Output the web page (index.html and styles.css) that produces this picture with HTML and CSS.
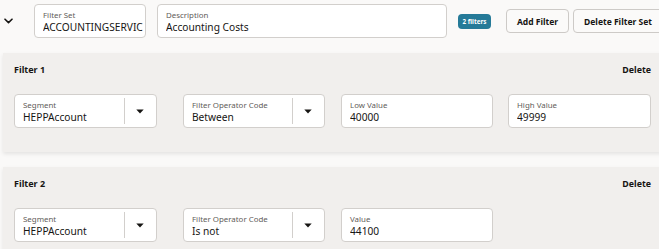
FILE: index.html
```html
<!DOCTYPE html>
<html lang="en">
<head>
<meta charset="utf-8">
<title>Filter Set</title>
<link rel="stylesheet" href="styles.css">
</head>
<body>
<div class="page">
  <div class="header">
    <button class="toggle" aria-label="Collapse">
      <svg width="9" height="6" viewBox="0 0 9 6"><path d="M1 1.2 L4.5 4.6 L8 1.2" fill="none" stroke="#161513" stroke-width="1.6" stroke-linecap="round" stroke-linejoin="round"/></svg>
    </button>
    <div class="field fs">
      <div class="field-body"><span class="label">Filter Set</span><div class="value">ACCOUNTINGSERVICES</div></div>
    </div>
    <div class="field desc">
      <div class="field-body"><span class="label">Description</span><div class="value">Accounting Costs</div></div>
    </div>
    <span class="badge">2 filters</span>
    <button class="btn add">Add Filter</button>
    <button class="btn del">Delete Filter Set</button>
  </div>

  <section class="panel">
    <div class="panel-head"><span class="title">Filter 1</span><span class="delete">Delete</span></div>
    <div class="fields">
      <div class="field select seg">
        <div class="field-body"><span class="label">Segment</span><div class="value">HEPPAccount</div></div>
        <span class="trigger"><svg width="8" height="5" viewBox="0 0 8 5"><path d="M0.3 0.5 H7.7 L4 4.5 Z" fill="#161513"/></svg></span>
      </div>
      <div class="field select op">
        <div class="field-body"><span class="label">Filter Operator Code</span><div class="value">Between</div></div>
        <span class="trigger"><svg width="8" height="5" viewBox="0 0 8 5"><path d="M0.3 0.5 H7.7 L4 4.5 Z" fill="#161513"/></svg></span>
      </div>
      <div class="field low">
        <div class="field-body"><span class="label">Low Value</span><div class="value">40000</div></div>
      </div>
      <div class="field high">
        <div class="field-body"><span class="label">High Value</span><div class="value">49999</div></div>
      </div>
    </div>
  </section>

  <section class="panel">
    <div class="panel-head"><span class="title">Filter 2</span><span class="delete">Delete</span></div>
    <div class="fields">
      <div class="field select seg">
        <div class="field-body"><span class="label">Segment</span><div class="value">HEPPAccount</div></div>
        <span class="trigger"><svg width="8" height="5" viewBox="0 0 8 5"><path d="M0.3 0.5 H7.7 L4 4.5 Z" fill="#161513"/></svg></span>
      </div>
      <div class="field select op">
        <div class="field-body"><span class="label">Filter Operator Code</span><div class="value">Is not</div></div>
        <span class="trigger"><svg width="8" height="5" viewBox="0 0 8 5"><path d="M0.3 0.5 H7.7 L4 4.5 Z" fill="#161513"/></svg></span>
      </div>
      <div class="field low">
        <div class="field-body"><span class="label">Value</span><div class="value">44100</div></div>
      </div>
    </div>
  </section>
</div>
</body>
</html>
```

FILE: styles.css
```css
* { box-sizing: border-box; }

html, body {
  margin: 0;
  padding: 0;
  background: #faf9f8;
  overflow: hidden;
}

body {
  font-family: "Noto Sans", "Open Sans", sans-serif;
  color: #161513;
}

.page {
  width: 700px;
  padding-left: 3px;
}

.header {
  display: flex;
  align-items: center;
  padding-top: 4px;
  padding-left: 1px;
  margin-bottom: 15px;
}

.toggle {
  border: 0;
  background: none;
  padding: 0;
  margin: 0 21px 0 0;
  width: 9px;
  height: 6px;
  display: flex;
}

.field {
  height: 34px;
  background: #ffffff;
  border: 1px solid #d2cfcc;
  border-radius: 4px;
  display: flex;
  flex: none;
}

.field-body {
  flex: 1;
  min-width: 0;
  padding: 5px 2px 0 8px;
}

.label {
  display: block;
  font-size: 7.9px;
  line-height: 10px;
  color: #5f5c59;
}

.value {
  font-size: 10.2px;
  line-height: 13px;
  margin-top: 1px;
  white-space: nowrap;
  overflow: hidden;
  color: #161513;
}

.fs { width: 112px; margin-right: 11px; }
.desc { width: 290px; }

.badge {
  margin-left: 11px;
  width: 33px;
  height: 15px;
  border-radius: 4px;
  background: #257a98;
  color: #ffffff;
  font-size: 6.3px;
  font-weight: 700;
  display: flex;
  align-items: center;
  justify-content: center;
  flex: none;
}

.btn {
  font-family: inherit;
  height: 24px;
  background: #fbfaf9;
  border: 1px solid #cdcac7;
  border-radius: 4px;
  font-size: 8.5px;
  font-weight: 700;
  color: #161513;
  padding: 0;
  flex: none;
}

.add { width: 63px; margin-left: 15px; }
.del { width: 90px; margin-left: 4px; }

.panel {
  width: 659px;
  background: #f1efed;
  padding: 11px 11px 24px 11px;
  margin-bottom: 15px;
  box-shadow: 0 2px 4px rgba(0, 0, 0, 0.09);
}

.panel-head {
  display: flex;
  justify-content: space-between;
  align-items: center;
  height: 12px;
  margin-bottom: 18px;
}

.title, .delete {
  font-size: 9px;
  font-weight: 700;
  line-height: 12px;
}

.delete { font-size: 8.8px; }

.fields {
  display: flex;
}

.seg { width: 143px; margin-right: 26px; }
.op { width: 142px; margin-right: 16px; }
.low { width: 152px; margin-right: 15px; }
.high { width: 143px; }

.trigger {
  width: 32px;
  flex: none;
  display: flex;
  align-items: center;
  justify-content: center;
  position: relative;
  padding-top: 1px;
}

.trigger::before {
  content: "";
  position: absolute;
  left: 0;
  top: 3px;
  bottom: 3px;
  border-left: 1px solid #d2cfcc;
}
```
